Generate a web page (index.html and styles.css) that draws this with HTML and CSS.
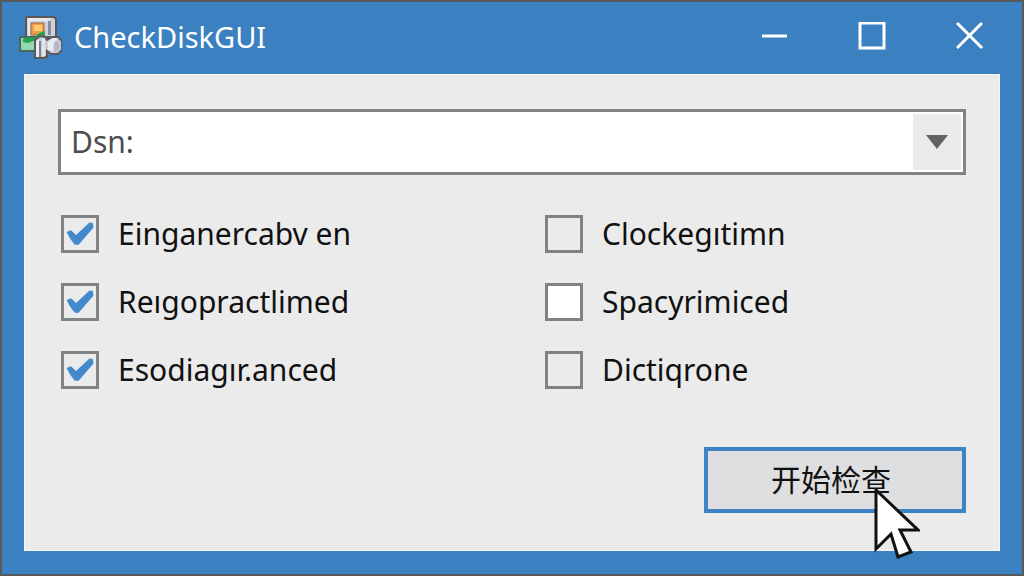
FILE: index.html
```html
<!DOCTYPE html>
<html lang="zh-CN">
<head>
<meta charset="utf-8">
<meta name="viewport" content="width=device-width, initial-scale=1">
<title>CheckDiskGUI</title>
<link rel="stylesheet" href="styles.css">
</head>
<body>
<div class="window">
  <header class="titlebar">
    <svg class="app-icon" viewBox="0 0 44 44" aria-hidden="true">
      <path d="M9 2h27l2 2v18H8V3z" fill="#cdd2de" stroke="#5b5958" stroke-width="2"/>
      <path d="M10 3h24l-4 3H12v14h-2z" fill="#e6e9f0"/>
      <path d="M30 6h3v14h-3z" fill="#8a8d99"/>
      <path d="M13 8h13v12H13z" fill="#ee9d45" stroke="#a3673b"/>
      <path d="M16 10h8v6h-8z" fill="#ffc873"/>
      <path d="M2 22h16v14H2z" fill="#93d8b3" stroke="#4a675c" stroke-width="2"/>
      <path d="M5 24l5-2 6 1 5-5 6-2v5l-4 1-3 5-5-1-5 2-5-1z" fill="#23a34b"/>
      <path d="M17 25l5-4 5 1 2 3 5-3h6l4 4v9l-4 4h-7l-4-3v6l-4 1h-8z" fill="#c9cddb" stroke="#5b5958" stroke-width="2"/>
      <path d="M18 26l3-2v18h-3z" fill="#e9ebf2"/>
      <path d="M21 26h2v16h-2z" fill="#7d7f8b"/>
      <path d="M24 23h3v18h-3z" fill="#e3e5ed"/>
      <path d="M30 27l5-4h5l-4 4-1 9-5-1z" fill="#e9ecf2"/>
      <path d="M36 28l5-2v8l-4 3z" fill="#b3b7c7"/>
    </svg>
    <h1 class="title">CheckDiskGUI</h1>
    <div class="window-controls">
      <button class="control" type="button" aria-label="Minimize">
        <svg class="control-icon" viewBox="0 0 28 28"><path d="M2 14h25" /></svg>
      </button>
      <button class="control" type="button" aria-label="Maximize">
        <svg class="control-icon" viewBox="0 0 28 28"><path d="M2 1h24v25H2z" /></svg>
      </button>
      <button class="control" type="button" aria-label="Close">
        <svg class="control-icon" viewBox="0 0 28 28"><path d="M1 1l25 25M26 1L1 26" /></svg>
      </button>
    </div>
  </header>
  <main class="content">
    <div class="combo">
      <select class="combo-select" aria-label="Dsn">
        <option>Dsn:</option>
      </select>
      <span class="combo-arrow"><svg class="arrow-icon" viewBox="0 0 22 14"><path d="M0 0h22L11 14z" /></svg></span>
    </div>
    <div class="options">
      <label class="option"><input class="check" type="checkbox" checked>Einganercabv en</label>
      <label class="option"><input class="check" type="checkbox">Clockegıtimn</label>
      <label class="option"><input class="check" type="checkbox" checked>Reıgopractlimed</label>
      <label class="option"><input class="check check-filled" type="checkbox">Spacyrimiced</label>
      <label class="option"><input class="check" type="checkbox" checked>Esodiagır.anced</label>
      <label class="option"><input class="check" type="checkbox">Dictiqrone</label>
    </div>
    <div class="actions">
      <button class="start" type="button">开始检查
        <svg class="cursor" viewBox="0 0 46 72" aria-hidden="true"><path d="M2 2v59l15-15 7 23 13-5-11-22h18z" /></svg>
      </button>
    </div>
  </main>
</div>
</body>
</html>
```
FILE: styles.css
```css
* {
  box-sizing: border-box;
}

body {
  margin: 0;
  font-family: "Noto Sans", "Noto Sans CJK SC", sans-serif;
  font-size: 30px;
  line-height: 38px;
  color: #111;
}

.window {
  display: flex;
  flex-direction: column;
  min-height: 100vh;
  padding: 0 22px 23px;
  border: 2px solid #57585a;
  background: #3b80c1;
}

.titlebar {
  display: flex;
  align-items: center;
  height: 72px;
  margin: 0 0 0 -6px;
  padding-bottom: 2px;
}

.app-icon {
  width: 44px;
  height: 44px;
}

.title {
  flex: 1;
  margin: 0 0 0 12px;
  font-size: 29px;
  font-weight: 400;
  color: #fff;
}

.window-controls {
  display: flex;
  gap: 38px;
}

.control {
  display: flex;
  justify-content: center;
  width: 60px;
  padding: 14px 0;
  border: 0;
  background: none;
}

.control-icon {
  width: 28px;
  height: 28px;
  margin-bottom: 2px;
  fill: none;
  stroke: #fff;
  stroke-width: 3;
}

.content {
  flex: 1;
  display: flex;
  flex-direction: column;
  padding: 34px 33px 37px;
  border: 1px solid #f6f6f6;
  background: #ebebeb;
}

.combo {
  display: grid;
  grid-template-columns: 1fr 50px;
  height: 66px;
  border: 3px solid #808284;
  background: #fff;
}

.combo-select {
  grid-area: 1 / 1 / 2 / 3;
  appearance: none;
  padding: 0 10px;
  border: 0;
  background: none;
  font: inherit;
  color: #4c4c4c;
}

.combo-arrow {
  grid-area: 1 / 2 / 2 / 3;
  display: grid;
  place-items: center;
  margin: 2px 2px 2px 0;
  background: #e8eaeb;
  pointer-events: none;
}

.arrow-icon {
  width: 22px;
  height: 14px;
  fill: #616365;
}

.options {
  display: grid;
  grid-template-columns: 484px 1fr;
  row-gap: 30px;
  margin: 40px 0 0 3px;
}

.option {
  display: flex;
  align-items: center;
  gap: 19px;
}

.check {
  appearance: none;
  display: grid;
  place-items: center;
  width: 38px;
  height: 38px;
  margin: 0;
  border: 3px solid #808284;
}

.check-filled {
  background: #fff;
}

.check:checked::before {
  content: "";
  width: 28px;
  height: 24px;
  background: #428acb;
  clip-path: polygon(2% 42%, 18% 34%, 36% 54%, 84% 2%, 96% 4%, 98% 24%, 44% 96%, 30% 94%, 14% 68%);
}

.actions {
  display: flex;
  justify-content: flex-end;
  margin-top: auto;
}

.start {
  position: relative;
  width: 262px;
  height: 66px;
  padding: 0 8px 0 0;
  border: 4px solid #3f82c5;
  background: #dedfe0;
  font: inherit;
  color: #111;
}

.cursor {
  position: absolute;
  top: 37px;
  left: 166px;
  width: 46px;
  height: 72px;
  fill: #fff;
  stroke: #111;
  stroke-width: 3;
}
```
